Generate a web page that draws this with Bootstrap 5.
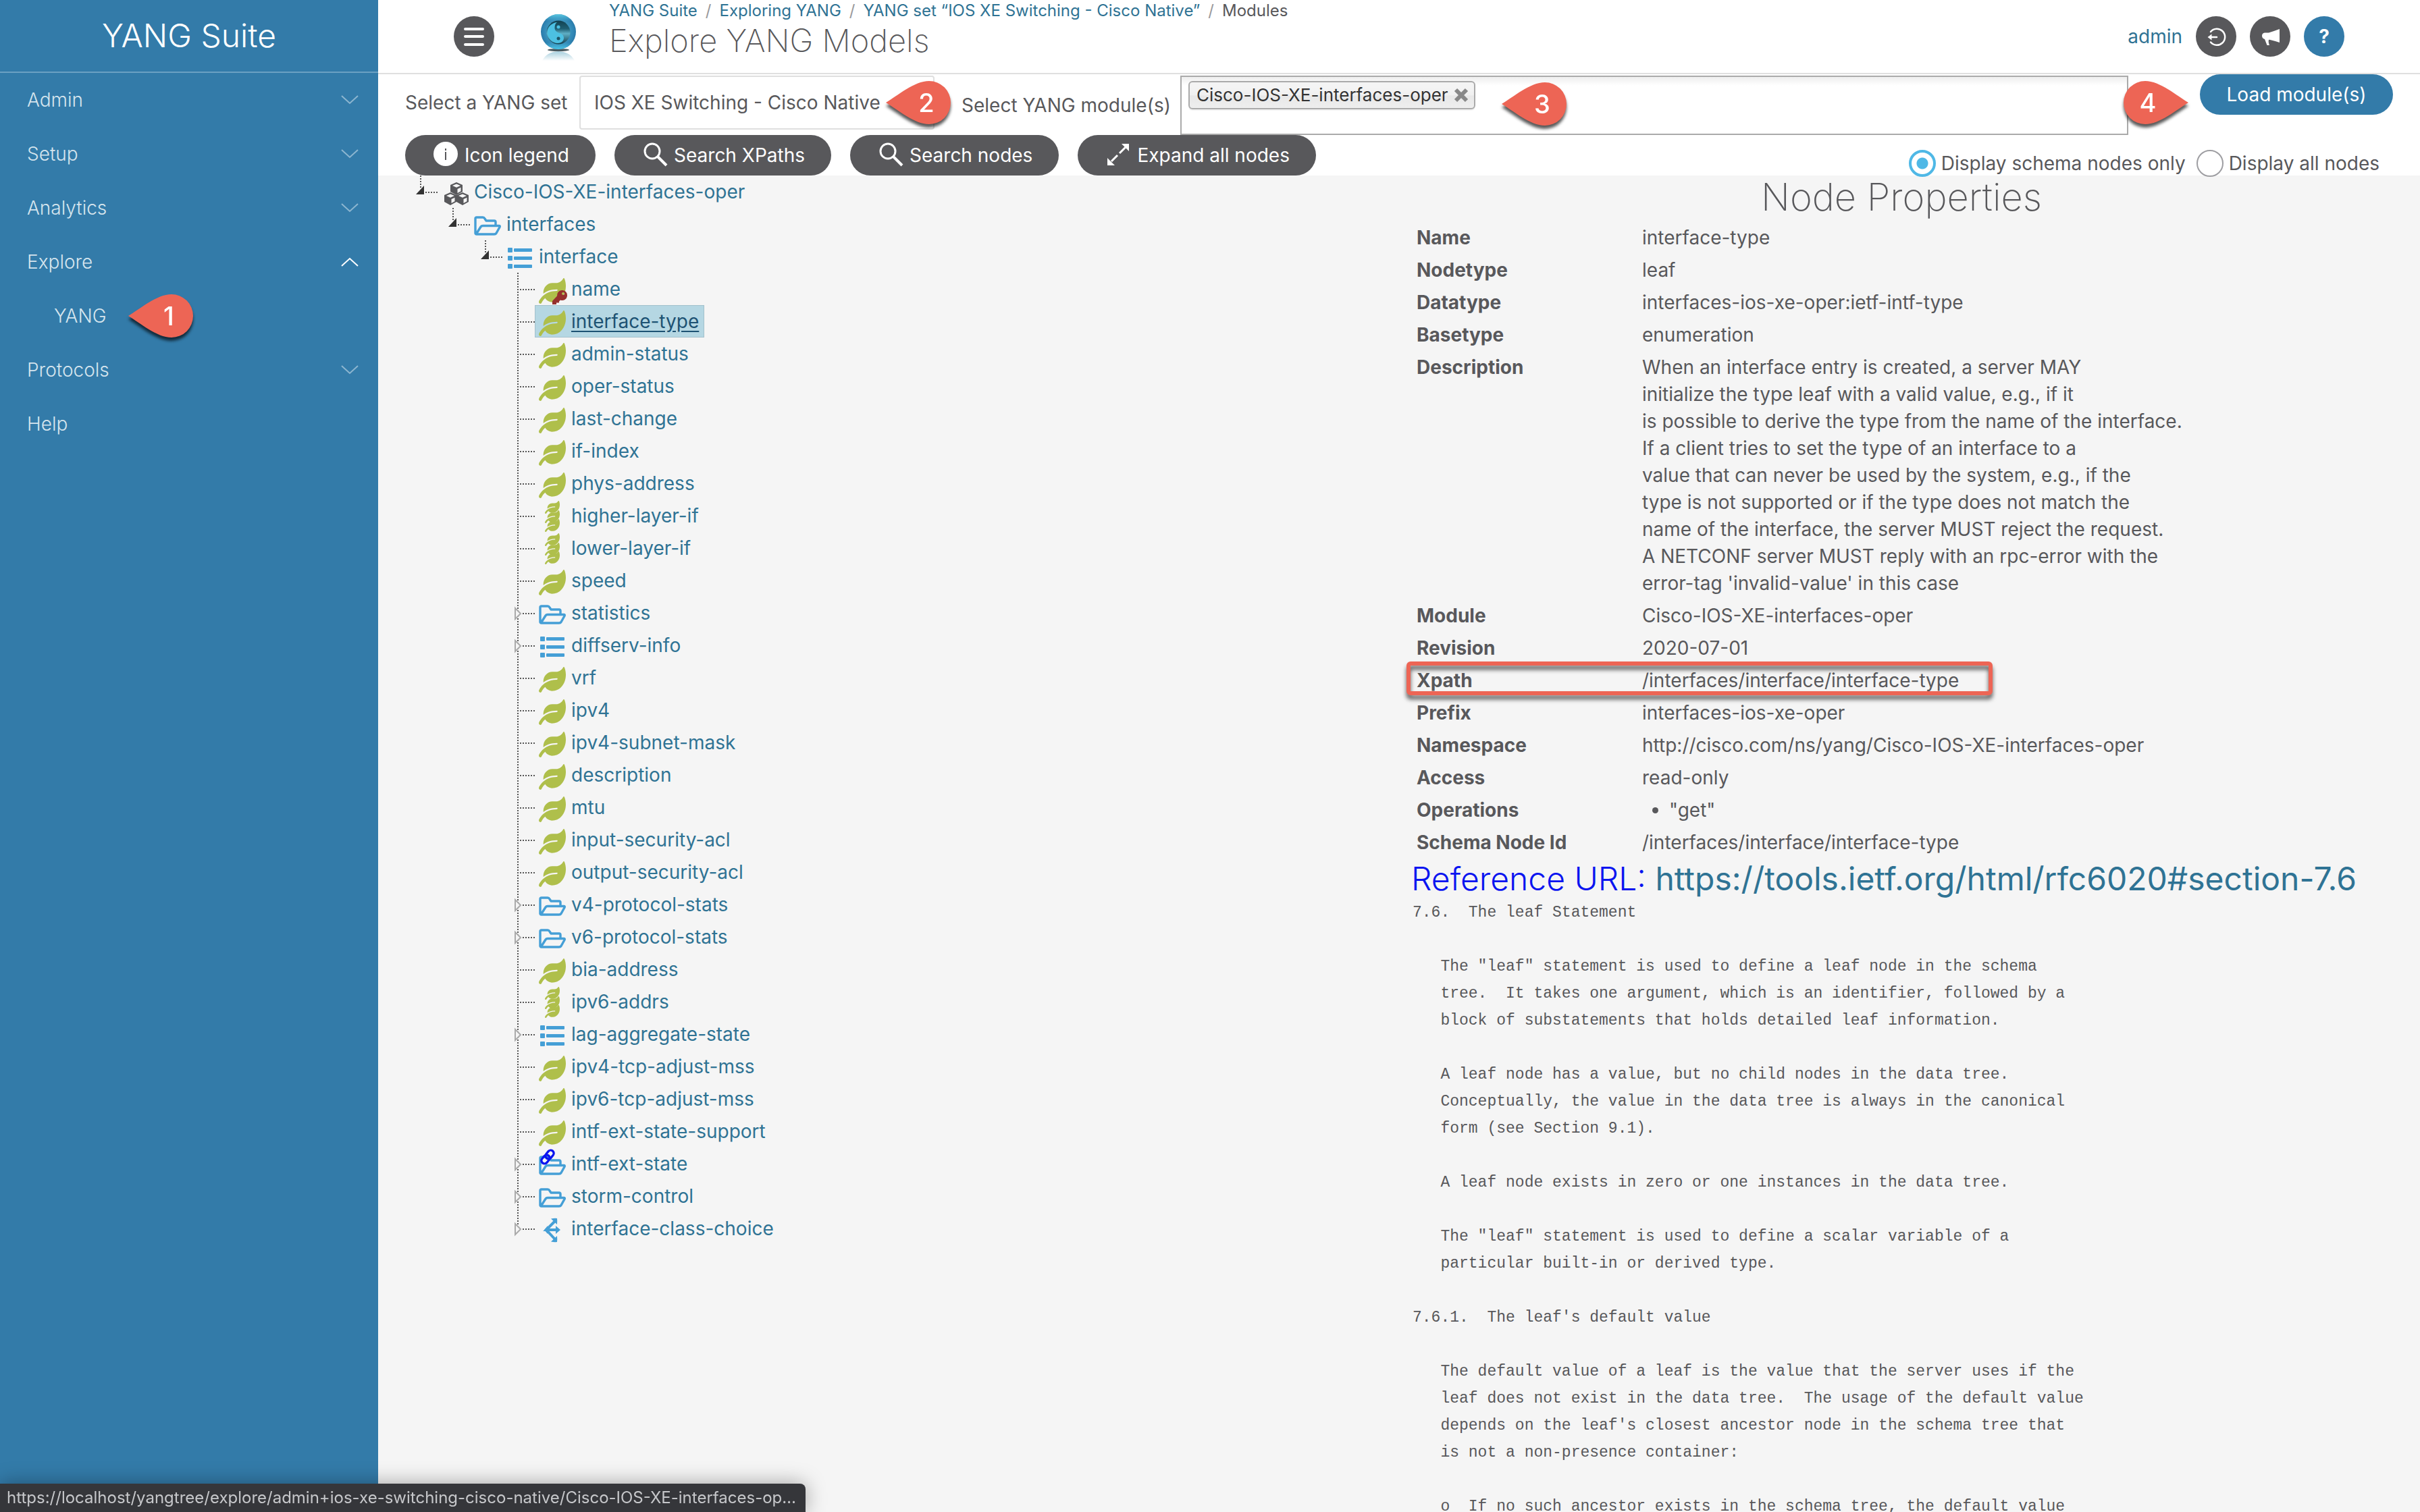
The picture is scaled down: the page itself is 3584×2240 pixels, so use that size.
<!DOCTYPE html>
<html lang="en">
<head>
<meta charset="utf-8">
<meta name="viewport" content="width=device-width, initial-scale=1">
<title>Explore YANG Models</title>
<link href="https://cdn.jsdelivr.net/npm/bootstrap@5.3.0/dist/css/bootstrap.min.css" rel="stylesheet">
<style>
  :root { --ink:#58585b; --brand:#337ba9; --linkc:#2f7394; --pin:#ed6555; --sky:#459fd6; --leaf:#afbf4b; }
  body { font-family: Inter, "Liberation Sans", sans-serif; font-size:28px; line-height:40px; color:var(--ink); background:#f5f5f5; }
  a { color:var(--linkc); text-decoration:none; }
  .side { width:560px; background:var(--brand); color:#fff; }
  .side-title { height:108px; font-size:48px; line-height:60px; font-weight:300; border-bottom:2px solid #6ba0c3; }
  .side .nav-link { height:80px; padding:0 28px 0 40px; color:#d6e5ee; font-weight:300; }
  .side .nav-link.sub { padding-left:80px; }
  .chev { width:28px; height:16px; fill:none; stroke:#8db6d0; stroke-width:2; }
  .chev.up { stroke:#fff; }
  .topbar { height:110px; border-bottom:2px solid #dfdfdf; padding:0 112px 0 112px; }
  .logo { margin:0 28px 0 48px; }
  .user-tools { gap:20px; }
  .round { width:60px; height:60px; border:0; border-radius:50%; background:var(--ink); color:#fff; padding:0; }
  .round.blue { background:var(--brand); font-size:28px; font-weight:700; }
  .crumbs { --bs-breadcrumb-divider-color:#9a9a9c; --bs-breadcrumb-item-padding-x:12px; --bs-breadcrumb-item-active-color:var(--ink); font-size:24px; line-height:32px; }
  .page-h { font-size:47px; line-height:56px; font-weight:200; }
  .pickers { height:90px; padding:0 40px; }
  .pickers > div { padding-top:2px; }
  .lab-set { width:258px; }
  .lab-mod { width:324px; }
  .set-select { width:526px; height:80px; padding:0 20px; font-size:28px; color:var(--ink); border:2px solid #dfdfdf; border-radius:4px; background-image:none; }
  .mods { height:88px; margin-right:106px; border:2px solid #aaa; background:linear-gradient(#eee, #fff 15%); padding:6px 10px; }
  .mods input { border:0; background:transparent; outline:0; height:40px; font-size:26px; }
  .chip { height:42px; padding:0 8px 0 10px; font-size:26px; line-height:36px; color:#333; border:2px solid #aaa; border-radius:6px; background:linear-gradient(#f4f4f4 20%, #f0f0f0 50%, #e8e8e8 52%, #eee); box-shadow:0 2px 0 rgba(0,0,0,.05); }
  .chip button { width:22px; border:0; background:none; padding:0; line-height:1; color:#888; }
  .chip svg { display:block; }
  .pill { height:60px; border:0; border-radius:30px; padding:0 39px 0 40px; gap:8px; font-size:28px; background:var(--ink); color:#fff; }
  .pill:hover { background:var(--ink); color:#fff; }
  .pill.blue { width:286px; background:var(--brand); }
  .pill svg { width:40px; height:40px; }
  .tools { height:60px; padding:0 40px; gap:28px; }
  .radios { padding:24px 20px 0 0; gap:16px; line-height:36px; }
  .radios .form-check-input { width:40px; height:40px; border:2px solid #9e9ea2; background-color:#fff; }
  .radios .form-check-input:checked { border:4px solid #4fb8e6; background-image:radial-gradient(circle, #4fb8e6 8px, #fff 9px); }
  .panes { padding:0 40px; }
  .panes > .row { --bs-gutter-x:32px; }
  .tree ul { padding-left:48px; list-style:none; }
  .tree li > .node { height:48px; }
  .twig, .ico { width:48px; height:48px; flex:none; }
  .node a { height:48px; padding:0 8px 0 2px; gap:4px; }
  .node a.picked { background:#b5d7e3; box-shadow:inset 0 0 0 1px #a3c1cc; color:#1d5273; }
  .node a.picked span { text-decoration:underline; text-underline-offset:4px; }
  .props-h { font-size:56px; line-height:64px; font-weight:200; padding-bottom:4px; }
  .props th, .props td { padding:4px 10px; vertical-align:top; }
  .props th { width:334px; font-weight:700; }
  .props ul { padding-left:40px; margin:0; }
  .frame { left:-5px; top:-4px; width:868px; height:50px; border:6px solid var(--pin); border-radius:6px; filter:drop-shadow(0 6px 3px rgba(0,0,0,.65)); }
  .ref-h { font-size:48px; line-height:60px; font-weight:300; color:#0a14f0; padding-left:2px; }
  .ref-h a { font-weight:400; }
  .rfc { font-family:"Liberation Mono", monospace; font-size:23px; line-height:40px; color:var(--ink); padding-left:4px; }
  .pin { position:absolute; width:98px; height:72px; overflow:visible; filter:drop-shadow(0 5px 2px rgba(0,0,0,.65)); z-index:2; }
  .pin path { fill:var(--pin); }
  .pin text { fill:#fff; font-size:38px; font-weight:500; text-anchor:middle; }
  .pin-1 { left:190px; top:0; bottom:0; margin:auto 0; }
  .pin-2 { left:752px; top:8px; }
  .pin-3 { left:474px; top:6px; }
  .pin-4 { right:342px; top:8px; }
  .status { left:0; bottom:0; height:42px; padding:0 14px 0 10px; font-size:24px; line-height:42px; color:#c6c7ca; background:#35363a; border-top-right-radius:8px; box-shadow:0 0 30px rgba(0,0,0,.35); z-index:3; }
</style>
</head>
<body>
<svg class="d-none" xmlns="http://www.w3.org/2000/svg">
  <symbol id="leafshape" viewBox="0 0 576 512" preserveAspectRatio="none"><path d="M546.2 9.7c-5.6-12.5-21.6-13-28.3-1.2C486.9 62.4 431.4 96 368 96h-80C182 96 96 182 96 288c0 7 .8 13.7 1.5 20.5C161.3 262.8 253.4 224 384 224c8.8 0 16 7.2 16 16s-7.2 16-16 16C132.6 256 26 410.1 2.4 468c-6.6 16.3 1.2 34.9 17.5 41.6 16.4 6.8 35-1.1 41.8-17.3 1.5-3.6 20.9-47.9 71.9-90.6 32.4 43.9 94 85.8 174.9 77.2C465.5 467.5 576 326.7 576 154.3c0-50.2-10.8-102.2-29.8-144.6z"/></symbol>
  <symbol id="i-leaf" viewBox="0 0 48 48"><use href="#leafshape" x="4" y="8" width="40" height="38" fill="#afbf4b"/></symbol>
  <symbol id="i-key" viewBox="0 0 48 48"><use href="#leafshape" x="4" y="8" width="40" height="38" fill="#afbf4b"/><path fill="#96302d" fill-rule="evenodd" d="M38 26a7.500 7.500 0 1 1-2 14.500l-2 2v2h-4v2.500h-6v-5l7-7.500A7.500 7.500 0 0 1 38 26zm2 3a2 2 0 1 0 .1 0z"/></symbol>
  <symbol id="i-leaves" viewBox="0 0 48 48"><g fill="#afbf4b"><use href="#leafshape" x="13" y="2" width="22" height="19"/><use href="#leafshape" x="13" y="16" width="22" height="19"/><use href="#leafshape" x="13" y="29" width="22" height="19"/></g></symbol>
  <symbol id="i-folder" viewBox="0 0 48 48"><path fill="none" stroke="#459fd6" stroke-width="3.400" stroke-linejoin="round" d="M6 38V16q0-2 2-2h9q2 0 3 2l2 3h12q2 0 2 2v6M7 39l7-11q1-1.500 3-1.500h24q2 0 1 2l-5 9q-1 1.500-3 1.500H8q-2 0-2-2"/></symbol>
  <symbol id="i-linked" viewBox="0 0 48 48"><use href="#i-folder"/><g fill="none" stroke="#0a14f0" stroke-width="3.400"><rect x="13" y="6" width="14" height="9" rx="4.500" transform="rotate(-50 20 10.500)"/><rect x="7" y="13" width="14" height="9" rx="4.500" transform="rotate(-50 14 17.500)"/></g></symbol>
  <symbol id="i-list" viewBox="0 0 48 48"><g fill="#459fd6"><rect x="6" y="11" width="7" height="7" rx="1"/><rect x="6" y="23" width="7" height="7" rx="1"/><rect x="6" y="35" width="7" height="7" rx="1"/><rect x="15" y="12" width="27" height="5" rx="1"/><rect x="15" y="24" width="27" height="5" rx="1"/><rect x="15" y="36" width="27" height="5" rx="1"/></g></symbol>
  <symbol id="i-choice" viewBox="0 0 48 48"><path fill="none" stroke="#459fd6" stroke-width="4" d="M28 13L15 26h16M15 26l13 14"/><path fill="#459fd6" d="M22 9.500q5-1 9-.5.500 4 0 9zM29 20l7 6-7 6zM22 43.500q5 1 9 .5.500-4 0-9zM12 26l5-6v12z"/></symbol>
  <symbol id="i-cubes" viewBox="0 0 48 48"><g fill="#58585b"><path id="cube" fill-rule="evenodd" d="M26 10l9 4v10l-9 5-9-5V14zM26 12.500l-6 2.600 6 2.600 6-2.600zM27.500 20v6l5-2.700v-5.500z"/><use href="#cube" x="-9" y="15"/><use href="#cube" x="9" y="15"/></g></symbol>
  <symbol id="t-open" viewBox="0 0 48 48"><path fill="none" stroke="#555" stroke-width="2" stroke-dasharray="2" d="M23 0v18M30 25h18"/><path fill="#333" d="M28 15v13H16z"/></symbol>
  <symbol id="t-leaf" viewBox="0 0 48 48"><path fill="none" stroke="#555" stroke-width="2" stroke-dasharray="2" d="M23 0v48M26 25h22"/></symbol>
  <symbol id="t-shut" viewBox="0 0 48 48"><path fill="none" stroke="#555" stroke-width="2" stroke-dasharray="2" d="M23 0v48M30 25h18"/><path fill="#f5f5f5" stroke="#aaa" stroke-width="2" d="M19 17l8 8-8 8z"/></symbol>
  <symbol id="t-last" viewBox="0 0 48 48"><path fill="none" stroke="#555" stroke-width="2" stroke-dasharray="2" d="M23 0v18M30 25h18"/><path fill="#f5f5f5" stroke="#aaa" stroke-width="2" d="M19 17l8 8-8 8z"/></symbol>
  <symbol id="i-search" viewBox="0 0 40 40"><g fill="none" stroke="#fff" stroke-width="3"><circle cx="16" cy="14" r="11"/><path d="M24 22l13 13" stroke-width="4"/></g></symbol>
</svg>

<div class="d-flex vh-100 overflow-hidden">
  <aside class="side flex-shrink-0">
    <div class="side-title d-flex align-items-center justify-content-center">YANG Suite</div>
    <nav class="nav flex-column">
      <a class="nav-link d-flex align-items-center justify-content-between" href="#">Admin<svg class="chev" viewBox="0 0 28 16"><path d="M2 2l12 11L26 2"/></svg></a>
      <a class="nav-link d-flex align-items-center justify-content-between" href="#">Setup<svg class="chev" viewBox="0 0 28 16"><path d="M2 2l12 11L26 2"/></svg></a>
      <a class="nav-link d-flex align-items-center justify-content-between" href="#">Analytics<svg class="chev" viewBox="0 0 28 16"><path d="M2 2l12 11L26 2"/></svg></a>
      <a class="nav-link d-flex align-items-center justify-content-between" href="#">Explore<svg class="chev up" viewBox="0 0 28 16"><path d="M2 14L14 3l12 11"/></svg></a>
      <a class="nav-link sub d-flex align-items-center position-relative" href="#">YANG
        <svg class="pin pin-1" viewBox="0 0 98 72"><path d="M0 36C17 26 42 4 64 4a32 32 0 0 1 0 64C42 68 17 46 0 36z"/><text x="60" y="50">1</text></svg></a>
      <a class="nav-link d-flex align-items-center justify-content-between" href="#">Protocols<svg class="chev" viewBox="0 0 28 16"><path d="M2 2l12 11L26 2"/></svg></a>
      <a class="nav-link d-flex align-items-center justify-content-between" href="#">Help</a>
    </nav>
  </aside>

  <main class="flex-fill">
    <div class="bg-white">
      <header class="topbar d-flex">
        <button class="round align-self-center flex-shrink-0" type="button" aria-label="Toggle menu">
          <svg width="60" height="60" viewBox="0 0 60 60"><path stroke="#fff" stroke-width="4" stroke-linecap="round" d="M17 19h26M17 30h26M17 42h26"/></svg>
        </button>
        <svg class="logo flex-shrink-0" width="94" height="108" viewBox="0 0 94 108" role="img" aria-label="YANG Suite logo">
          <defs>
            <radialGradient id="rim" cx=".5" cy=".5" r=".5"><stop offset=".65" stop-color="#3b93bd"/><stop offset=".88" stop-color="#2f84b3"/><stop offset="1" stop-color="#2a79a8"/></radialGradient>
            <linearGradient id="glow" x1="0" y1="0" x2="0" y2="1"><stop offset="0" stop-color="#62d3ea" stop-opacity=".9"/><stop offset=".2" stop-color="#4fc0e0" stop-opacity="0"/><stop offset=".8" stop-color="#4fc0e0" stop-opacity="0"/><stop offset="1" stop-color="#48c8ea"/></linearGradient>
            <linearGradient id="dusk" x1="0" y1="0" x2="0" y2="1"><stop offset="0" stop-color="#12404f"/><stop offset=".35" stop-color="#1f5f73"/><stop offset=".55" stop-color="#5fb0c6"/><stop offset="1" stop-color="#123d4c"/></linearGradient>
            <linearGradient id="mirror" x1="0" y1="0" x2="0" y2="1"><stop offset="0" stop-color="#a5cedd"/><stop offset="1" stop-color="#fff"/></linearGradient>
          </defs>
          <path fill="url(#mirror)" d="M23 90q6-13 24-14 18 1 24 14z"/>
          <ellipse cx="47" cy="74" rx="16" ry="2" fill="#4a5a60"/>
          <circle cx="47" cy="47" r="26" fill="url(#rim)"/>
          <circle cx="47" cy="47" r="26" fill="url(#glow)"/>
          <circle cx="47" cy="48" r="17.500" fill="url(#dusk)"/>
          <path fill="#4cc0e2" d="M45 33c-8 1-15 7-14.500 16A16 16 0 0 0 46 64c6 0 9-4 9-8 0-9-13-5-13.500-14.500 0-4 1-7 3.500-8.500z"/>
          <circle cx="47" cy="40" r="2.500" fill="#4cc0e2"/><circle cx="47" cy="57" r="2.500" fill="#1d5568"/>
        </svg>
        <div class="flex-fill">
          <nav aria-label="breadcrumb">
            <ol class="breadcrumb crumbs mb-0">
              <li class="breadcrumb-item"><a href="#">YANG Suite</a></li>
              <li class="breadcrumb-item"><a href="#">Exploring YANG</a></li>
              <li class="breadcrumb-item"><a href="#">YANG set “IOS XE Switching - Cisco Native”</a></li>
              <li class="breadcrumb-item active" aria-current="page">Modules</li>
            </ol>
          </nav>
          <h1 class="page-h mb-0">Explore YANG Models</h1>
        </div>
        <div class="user-tools d-flex align-items-center">
          <a href="#">admin</a>
          <button class="round" type="button" aria-label="Log out">
            <svg width="60" height="60" viewBox="0 0 60 60"><path fill="none" stroke="#fff" stroke-width="2.500" stroke-linecap="round" d="M22 23a12 12 0 1 1 0 15.500M22 31h9"/><path fill="#fff" d="M17.500 31l6-4.500v9z"/></svg>
          </button>
          <button class="round" type="button" aria-label="Announcements">
            <svg width="60" height="60" viewBox="0 0 60 60"><path fill="#fff" d="M44 19v20q-6-2-15-4.200L28 35q-1 3 1 8h-3.500L22 34q-4-1-4-5t4-4.500h6Q36 22 44 19z"/></svg>
          </button>
          <button class="round blue" type="button" aria-label="Help">?</button>
        </div>
      </header>

      <div class="pickers d-flex align-items-start position-relative">
        <div class="d-flex align-items-center">
          <label class="lab-set" for="yangset">Select a YANG set</label>
          <select class="form-select set-select" id="yangset"><option>IOS XE Switching - Cisco Native</option></select>
          <svg class="pin pin-2" viewBox="0 0 98 72"><path d="M0 34C17 24 42 2 64 2a32 32 0 0 1 0 64C42 66 17 44 0 34z"/><text x="60" y="48">2</text></svg>
        </div>
        <div class="d-flex align-items-center flex-fill ps-4 ms-3">
          <label class="lab-mod" for="mods">Select YANG module(s)</label>
          <div class="mods d-flex align-items-start flex-fill position-relative">
            <span class="chip d-flex align-items-center gap-2 text-nowrap">Cisco-IOS-XE-interfaces-oper
              <button type="button" aria-label="Remove"><svg width="22" height="22" viewBox="0 0 22 22"><path stroke="#888" stroke-width="6" d="M3 3l16 16M19 3L3 19"/></svg></button></span>
            <input id="mods" type="text">
            <svg class="pin pin-3" viewBox="0 0 98 72"><path d="M0 34C17 24 42 2 64 2a32 32 0 0 1 0 64C42 66 17 44 0 34z"/><text x="60" y="48">3</text></svg>
          </div>
        </div>
        <button class="btn pill blue px-0" type="button">Load module(s)</button>
        <svg class="pin pin-4" viewBox="0 0 98 72"><path d="M97 34C80 24 55 2 33 2a32 32 0 0 0 0 64C55 66 80 44 97 34z"/><text x="37" y="48">4</text></svg>
      </div>

      <div class="tools d-flex">
        <button class="btn pill d-flex align-items-center" type="button"><svg viewBox="0 0 40 40"><circle cx="20" cy="18" r="18" fill="#fff"/><path stroke="#58585b" stroke-width="2" d="M20 15v12M20 10v3"/></svg>Icon legend</button>
        <button class="btn pill d-flex align-items-center" type="button"><svg><use href="#i-search"/></svg>Search XPaths</button>
        <button class="btn pill d-flex align-items-center" type="button"><svg><use href="#i-search"/></svg>Search nodes</button>
        <button class="btn pill d-flex align-items-center" type="button"><svg viewBox="0 0 40 40"><path fill="none" stroke="#fff" stroke-width="3" d="M10 29l9-9M22 17l9-9"/><path fill="#fff" d="M36 3v11L25 3zM4 35V24l11 11z"/></svg>Expand all nodes</button>
        <div class="radios d-flex ms-auto">
          <div class="d-flex align-items-center gap-2"><input class="form-check-input m-0 flex-shrink-0" type="radio" name="show" id="schema" checked><label for="schema">Display schema nodes only</label></div>
          <div class="d-flex align-items-center gap-2"><input class="form-check-input m-0 flex-shrink-0" type="radio" name="show" id="all"><label for="all">Display all nodes</label></div>
        </div>
      </div>
    </div>

    <div class="panes">
      <div class="row">
        <div class="col-6">
          <ul class="tree list-unstyled mb-0">
            <li><div class="node d-flex"><svg class="twig"><use href="#t-open"/></svg><a class="d-flex align-items-center" href="#"><svg class="ico"><use href="#i-cubes"/></svg><span>Cisco-IOS-XE-interfaces-oper</span></a></div>
            <ul>
              <li><div class="node d-flex"><svg class="twig"><use href="#t-open"/></svg><a class="d-flex align-items-center" href="#"><svg class="ico"><use href="#i-folder"/></svg><span>interfaces</span></a></div>
              <ul>
                <li><div class="node d-flex"><svg class="twig"><use href="#t-open"/></svg><a class="d-flex align-items-center" href="#"><svg class="ico"><use href="#i-list"/></svg><span>interface</span></a></div>
                <ul>
                  <li><div class="node d-flex"><svg class="twig"><use href="#t-leaf"/></svg><a class="d-flex align-items-center" href="#"><svg class="ico"><use href="#i-key"/></svg><span>name</span></a></div></li>
                  <li><div class="node d-flex"><svg class="twig"><use href="#t-leaf"/></svg><a class="d-flex align-items-center picked" href="#"><svg class="ico"><use href="#i-leaf"/></svg><span>interface-type</span></a></div></li>
                  <li><div class="node d-flex"><svg class="twig"><use href="#t-leaf"/></svg><a class="d-flex align-items-center" href="#"><svg class="ico"><use href="#i-leaf"/></svg><span>admin-status</span></a></div></li>
                  <li><div class="node d-flex"><svg class="twig"><use href="#t-leaf"/></svg><a class="d-flex align-items-center" href="#"><svg class="ico"><use href="#i-leaf"/></svg><span>oper-status</span></a></div></li>
                  <li><div class="node d-flex"><svg class="twig"><use href="#t-leaf"/></svg><a class="d-flex align-items-center" href="#"><svg class="ico"><use href="#i-leaf"/></svg><span>last-change</span></a></div></li>
                  <li><div class="node d-flex"><svg class="twig"><use href="#t-leaf"/></svg><a class="d-flex align-items-center" href="#"><svg class="ico"><use href="#i-leaf"/></svg><span>if-index</span></a></div></li>
                  <li><div class="node d-flex"><svg class="twig"><use href="#t-leaf"/></svg><a class="d-flex align-items-center" href="#"><svg class="ico"><use href="#i-leaf"/></svg><span>phys-address</span></a></div></li>
                  <li><div class="node d-flex"><svg class="twig"><use href="#t-leaf"/></svg><a class="d-flex align-items-center" href="#"><svg class="ico"><use href="#i-leaves"/></svg><span>higher-layer-if</span></a></div></li>
                  <li><div class="node d-flex"><svg class="twig"><use href="#t-leaf"/></svg><a class="d-flex align-items-center" href="#"><svg class="ico"><use href="#i-leaves"/></svg><span>lower-layer-if</span></a></div></li>
                  <li><div class="node d-flex"><svg class="twig"><use href="#t-leaf"/></svg><a class="d-flex align-items-center" href="#"><svg class="ico"><use href="#i-leaf"/></svg><span>speed</span></a></div></li>
                  <li><div class="node d-flex"><svg class="twig"><use href="#t-shut"/></svg><a class="d-flex align-items-center" href="#"><svg class="ico"><use href="#i-folder"/></svg><span>statistics</span></a></div></li>
                  <li><div class="node d-flex"><svg class="twig"><use href="#t-shut"/></svg><a class="d-flex align-items-center" href="#"><svg class="ico"><use href="#i-list"/></svg><span>diffserv-info</span></a></div></li>
                  <li><div class="node d-flex"><svg class="twig"><use href="#t-leaf"/></svg><a class="d-flex align-items-center" href="#"><svg class="ico"><use href="#i-leaf"/></svg><span>vrf</span></a></div></li>
                  <li><div class="node d-flex"><svg class="twig"><use href="#t-leaf"/></svg><a class="d-flex align-items-center" href="#"><svg class="ico"><use href="#i-leaf"/></svg><span>ipv4</span></a></div></li>
                  <li><div class="node d-flex"><svg class="twig"><use href="#t-leaf"/></svg><a class="d-flex align-items-center" href="#"><svg class="ico"><use href="#i-leaf"/></svg><span>ipv4-subnet-mask</span></a></div></li>
                  <li><div class="node d-flex"><svg class="twig"><use href="#t-leaf"/></svg><a class="d-flex align-items-center" href="#"><svg class="ico"><use href="#i-leaf"/></svg><span>description</span></a></div></li>
                  <li><div class="node d-flex"><svg class="twig"><use href="#t-leaf"/></svg><a class="d-flex align-items-center" href="#"><svg class="ico"><use href="#i-leaf"/></svg><span>mtu</span></a></div></li>
                  <li><div class="node d-flex"><svg class="twig"><use href="#t-leaf"/></svg><a class="d-flex align-items-center" href="#"><svg class="ico"><use href="#i-leaf"/></svg><span>input-security-acl</span></a></div></li>
                  <li><div class="node d-flex"><svg class="twig"><use href="#t-leaf"/></svg><a class="d-flex align-items-center" href="#"><svg class="ico"><use href="#i-leaf"/></svg><span>output-security-acl</span></a></div></li>
                  <li><div class="node d-flex"><svg class="twig"><use href="#t-shut"/></svg><a class="d-flex align-items-center" href="#"><svg class="ico"><use href="#i-folder"/></svg><span>v4-protocol-stats</span></a></div></li>
                  <li><div class="node d-flex"><svg class="twig"><use href="#t-shut"/></svg><a class="d-flex align-items-center" href="#"><svg class="ico"><use href="#i-folder"/></svg><span>v6-protocol-stats</span></a></div></li>
                  <li><div class="node d-flex"><svg class="twig"><use href="#t-leaf"/></svg><a class="d-flex align-items-center" href="#"><svg class="ico"><use href="#i-leaf"/></svg><span>bia-address</span></a></div></li>
                  <li><div class="node d-flex"><svg class="twig"><use href="#t-leaf"/></svg><a class="d-flex align-items-center" href="#"><svg class="ico"><use href="#i-leaves"/></svg><span>ipv6-addrs</span></a></div></li>
                  <li><div class="node d-flex"><svg class="twig"><use href="#t-shut"/></svg><a class="d-flex align-items-center" href="#"><svg class="ico"><use href="#i-list"/></svg><span>lag-aggregate-state</span></a></div></li>
                  <li><div class="node d-flex"><svg class="twig"><use href="#t-leaf"/></svg><a class="d-flex align-items-center" href="#"><svg class="ico"><use href="#i-leaf"/></svg><span>ipv4-tcp-adjust-mss</span></a></div></li>
                  <li><div class="node d-flex"><svg class="twig"><use href="#t-leaf"/></svg><a class="d-flex align-items-center" href="#"><svg class="ico"><use href="#i-leaf"/></svg><span>ipv6-tcp-adjust-mss</span></a></div></li>
                  <li><div class="node d-flex"><svg class="twig"><use href="#t-leaf"/></svg><a class="d-flex align-items-center" href="#"><svg class="ico"><use href="#i-leaf"/></svg><span>intf-ext-state-support</span></a></div></li>
                  <li><div class="node d-flex"><svg class="twig"><use href="#t-shut"/></svg><a class="d-flex align-items-center" href="#"><svg class="ico"><use href="#i-linked"/></svg><span>intf-ext-state</span></a></div></li>
                  <li><div class="node d-flex"><svg class="twig"><use href="#t-shut"/></svg><a class="d-flex align-items-center" href="#"><svg class="ico"><use href="#i-folder"/></svg><span>storm-control</span></a></div></li>
                  <li><div class="node d-flex"><svg class="twig"><use href="#t-last"/></svg><a class="d-flex align-items-center" href="#"><svg class="ico"><use href="#i-choice"/></svg><span>interface-class-choice</span></a></div></li>
                </ul></li>
              </ul></li>
            </ul></li>
          </ul>
        </div>

        <div class="col-6">
          <h2 class="props-h text-center mb-0">Node Properties</h2>
          <table class="props w-100">
            <tbody>
              <tr><th scope="row">Name</th><td>interface-type</td></tr>
              <tr><th scope="row">Nodetype</th><td>leaf</td></tr>
              <tr><th scope="row">Datatype</th><td>interfaces-ios-xe-oper:ietf-intf-type</td></tr>
              <tr><th scope="row">Basetype</th><td>enumeration</td></tr>
              <tr><th scope="row">Description</th><td>When an interface entry is created, a server MAY<br>initialize the type leaf with a valid value, e.g., if it<br>is possible to derive the type from the name of the interface.<br>If a client tries to set the type of an interface to a<br>value that can never be used by the system, e.g., if the<br>type is not supported or if the type does not match the<br>name of the interface, the server MUST reject the request.<br>A NETCONF server MUST reply with an rpc-error with the<br>error-tag 'invalid-value' in this case</td></tr>
              <tr><th scope="row">Module</th><td>Cisco-IOS-XE-interfaces-oper</td></tr>
              <tr><th scope="row">Revision</th><td>2020-07-01</td></tr>
              <tr><th scope="row" class="position-relative">Xpath<span class="frame position-absolute"></span></th><td>/interfaces/interface/interface-type</td></tr>
              <tr><th scope="row">Prefix</th><td>interfaces-ios-xe-oper</td></tr>
              <tr><th scope="row">Namespace</th><td>http://cisco.com/ns/yang/Cisco-IOS-XE-interfaces-oper</td></tr>
              <tr><th scope="row">Access</th><td>read-only</td></tr>
              <tr><th scope="row">Operations</th><td><ul><li>"get"</li></ul></td></tr>
              <tr><th scope="row">Schema Node Id</th><td>/interfaces/interface/interface-type</td></tr>
            </tbody>
          </table>
          <h3 class="ref-h mb-0 text-nowrap">Reference URL: <a href="#">https://tools.ietf.org/html/rfc6020#section-7.6</a></h3>
<pre class="rfc mb-0">7.6.  The leaf Statement

   The "leaf" statement is used to define a leaf node in the schema
   tree.  It takes one argument, which is an identifier, followed by a
   block of substatements that holds detailed leaf information.

   A leaf node has a value, but no child nodes in the data tree.
   Conceptually, the value in the data tree is always in the canonical
   form (see Section 9.1).

   A leaf node exists in zero or one instances in the data tree.

   The "leaf" statement is used to define a scalar variable of a
   particular built-in or derived type.

7.6.1.  The leaf's default value

   The default value of a leaf is the value that the server uses if the
   leaf does not exist in the data tree.  The usage of the default value
   depends on the leaf's closest ancestor node in the schema tree that
   is not a non-presence container:

   o  If no such ancestor exists in the schema tree, the default value</pre>
        </div>
      </div>
    </div>
  </main>
</div>
<div class="status position-fixed text-nowrap">https://localhost/yangtree/explore/admin+ios-xe-switching-cisco-native/Cisco-IOS-XE-interfaces-op…</div>
<script src="https://cdn.jsdelivr.net/npm/bootstrap@5.3.0/dist/js/bootstrap.bundle.min.js"></script>
</body>
</html>
